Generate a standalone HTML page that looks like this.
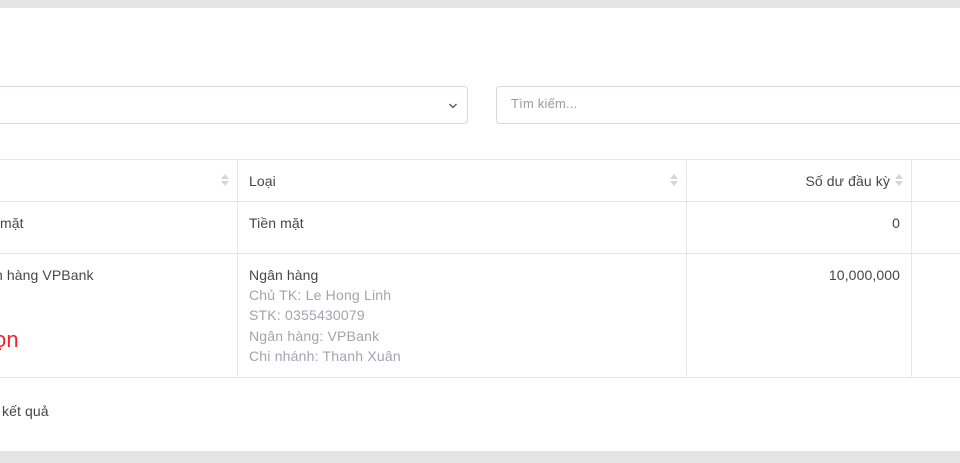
<!DOCTYPE html>
<html><head><meta charset="utf-8"><style>
body{margin:0;width:960px;height:463px;overflow:hidden;background:#e4e4e4;font-family:"Liberation Sans",Arial,sans-serif;font-size:14px;color:#45454f;position:relative;letter-spacing:0.1px}
.card{position:absolute;left:0;top:8px;width:960px;height:443px;background:#fff}
.abs{position:absolute;white-space:nowrap}
.box{position:absolute;border:1px solid #d6d6de;border-radius:4px;box-sizing:border-box;background:#fff}
.hl{position:absolute;height:1px;background:#e6e6ec;left:0;width:960px}
.vl{position:absolute;width:1px;background:#e6e6ec;top:159px;height:219px}
.sort{position:absolute;width:8px;height:12px}
.g{color:#a3a3b0;letter-spacing:0.2px}
</style></head><body>
<div class="card"></div>
<div class="box" style="left:-10px;top:86px;width:478px;height:38px"></div>
<svg class="abs" style="left:448px;top:102px" width="10" height="8"><path d="M1.5 2 L5 5.5 L8.5 2" stroke="#555" stroke-width="1.3" fill="none"/></svg>
<div class="box" style="left:496px;top:86px;width:480px;height:38px"></div>
<div class="abs g" style="left:511px;top:96px;font-size:13px;color:#9a9aa6">Tìm kiếm...</div>
<div class="hl" style="top:159px"></div>
<div class="hl" style="top:201px"></div>
<div class="hl" style="top:253px"></div>
<div class="hl" style="top:377px"></div>
<div class="vl" style="left:237px"></div>
<div class="vl" style="left:686px"></div>
<div class="vl" style="left:911px"></div>
<svg class="sort" style="left:221px;top:174px"><path d="M4 0L8 5H0Z M0 7H8L4 12Z" fill="#d4d4dc"/></svg>
<svg class="sort" style="left:670px;top:174px"><path d="M4 0L8 5H0Z M0 7H8L4 12Z" fill="#d4d4dc"/></svg>
<svg class="sort" style="left:895px;top:174px"><path d="M4 0L8 5H0Z M0 7H8L4 12Z" fill="#d4d4dc"/></svg>
<div class="abs" style="left:249px;top:173px">Loại</div>
<div class="abs" style="right:70px;top:173px">Số dư đầu kỳ</div>
<div class="abs" style="left:0;top:215px">mặt</div>
<div class="abs" style="left:249px;top:215px">Tiền mặt</div>
<div class="abs" style="right:60px;top:215px">0</div>
<div class="abs" style="left:-5px;top:267px">n hàng VPBank</div>
<div class="abs" style="left:249px;top:267px">Ngân hàng</div>
<div class="abs g" style="left:249px;top:287px">Chủ TK: Le Hong Linh</div>
<div class="abs g" style="left:249px;top:307px">STK: 0355430079</div>
<div class="abs g" style="left:249px;top:328px">Ngân hàng: VPBank</div>
<div class="abs g" style="left:249px;top:348px">Chi nhánh: Thanh Xuân</div>
<div class="abs" style="right:60px;top:267px">10,000,000</div>
<div class="abs" style="left:-6px;top:327px;font-size:22px;color:#f5222d">ọn</div>
<div class="abs" style="left:2px;top:403px">kết quả</div>
</body></html>
